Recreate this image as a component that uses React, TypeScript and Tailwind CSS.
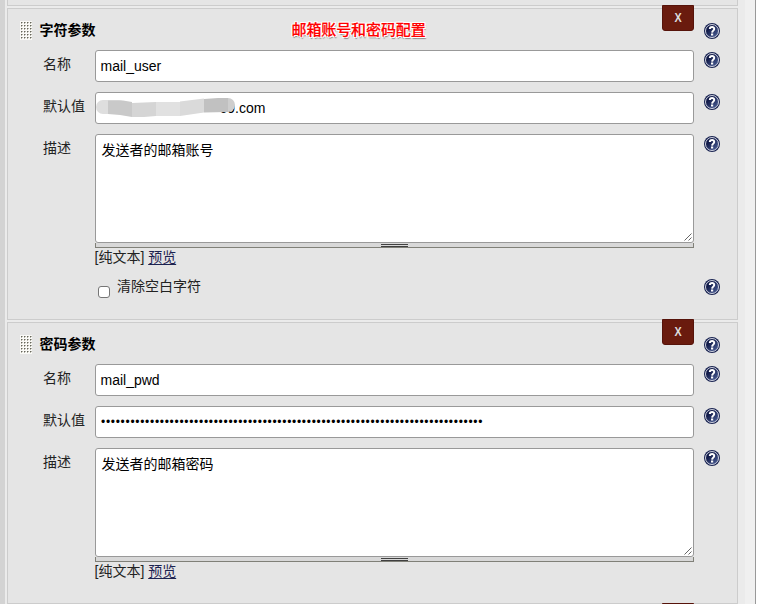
import { useId, type ReactNode } from "react";

function HelpIcon() {
  const id = useId();
  return (
    <svg width="16" height="16" viewBox="0 0 16 16" className="block">
      <defs>
        <linearGradient id={id} x1="0" y1="0" x2="1" y2="1">
          <stop offset="0.3" stopColor="#111a48" />
          <stop offset="1" stopColor="#5267a0" />
        </linearGradient>
      </defs>
      <circle cx="8" cy="8" r="8" fill="#1a2452" />
      <circle cx="8" cy="8" r="6.5" fill={`url(#${id})`} stroke="#e4e7ef" strokeWidth="0.9" />
      <path d="M5.8 6C5.9 3.3 10.4 3.3 10.2 6C10.1 7.6 8.2 7.7 8.1 9.6" fill="none" stroke="#fff" strokeWidth="2" />
      <rect x="7" y="10.5" width="2.2" height="2" fill="#fff" />
    </svg>
  );
}

function Grip() {
  const dots = [];
  for (let r = 0; r < 6; r++)
    for (let c = 0; c < 4; c++)
      dots.push(
        <g key={`${r}-${c}`}>
          <rect x={1 + c * 3} y={1 + r * 3} width="1" height="1" fill="#66665c" />
          <rect x={1 + c * 3} y={2 + r * 3} width="1" height="1" fill="#b4b3a9" />
          <rect x={c * 3 + 2} y={1 + r * 3} width="1" height="1" fill="#b4b3a9" />
        </g>
      );
  return (
    <svg width="12" height="19" className="block bg-[#fafaf7]" shapeRendering="crispEdges">
      {dots}
    </svg>
  );
}

function Row({ label, help = true, className, children }: { label?: string; help?: boolean; className: string; children: ReactNode }) {
  return (
    <div className={`flex items-start ${className}`}>
      <div className="w-[52px] shrink-0 pt-[3px] text-[14px] leading-[22px]">{label}</div>
      <div className="w-[599px] shrink-0">{children}</div>
      {help && <div className="ml-[10px] pt-[2px]"><HelpIcon /></div>}
    </div>
  );
}

const box = "relative flex h-8 items-center rounded-[3px] border border-[#999] bg-white px-[4.5px] text-[14px] text-black";

function Description({ text }: { text: string }) {
  return (
    <div>
      <div className="relative h-[109px] rounded-[3px] border border-[#999] bg-white px-[5.5px] pt-[4px] text-[14px] leading-[22px] text-black">
        {text}
        <svg width="8" height="8" className="absolute right-[1px] bottom-[1px]">
          <path d="M0.5 7.5L7.5 0.5M4.5 7.5L7.5 4.5" stroke="#555" strokeWidth="0.9" />
        </svg>
      </div>
      <div className="flex h-[5px] justify-center border-x border-b border-[#808078] bg-[#d8d8d8]">
        <div className="mt-px h-[3px] w-[27px] border-y border-[#404040]" />
      </div>
      <div className="-mt-px -ml-[0.5px] text-[14px] leading-[20px]">
        [纯文本] <a className="text-[#1c2250] underline underline-offset-2">预览</a>
      </div>
    </div>
  );
}

function DeleteButton({ children }: { children?: ReactNode }) {
  return (
    <button className="absolute -top-[4px] left-[654px] h-[26px] w-8 rounded-b-[3px] border border-[#56130a] bg-[#6a1b0e] text-[12px] leading-[24px] font-bold text-[#ddd]">
      <span className="inline-block scale-x-90 scale-y-110">{children}</span>
    </button>
  );
}

const panel = "relative w-[731px] shrink-0 border border-[#ccc] bg-[#e5e5e5]";

function Panel({ title, note, height, children }: { title: string; note?: string; height: string; children?: ReactNode }) {
  return (
    <section className={`${panel} ${height}`}>
      <DeleteButton>X</DeleteButton>
      <div className="flex h-[41px] items-start pl-[12px]">
        <div className="pt-[12px]"><Grip /></div>
        <h2 className="ml-[7.5px] w-[252px] pt-[10px] text-[14px] leading-[22px] font-bold text-black">{title}</h2>
        <div className="w-[412.5px] pt-[10px] text-[15px] leading-[22px] font-medium tracking-[-0.1px] text-[#f00] [-webkit-text-stroke:0.2px_#f00] [text-shadow:-1px_-1px_0_#fff,1px_-1px_0_#fff,-1px_1px_0_#fff,1px_1px_0_#fff,-1px_0_0_#fff,1px_0_0_#fff,1px_2px_1px_#888]">{note}</div>
        <div className="pt-[14px]"><HelpIcon /></div>
      </div>
      <div className="pl-[35px]">{children}</div>
    </section>
  );
}

function Redaction() {
  return (
    <svg width="142" height="22" className="absolute left-0 top-[4px]">
      <rect x="0" y="3" width="30" height="14" rx="7" fill="#dedede" />
      <path d="M12 3.5H27L36 5V20L24 18L12 17Z" fill="#c9c9c9" />
      <path d="M36 6L60 5V19L48 20H36Z" fill="#d5d5d5" />
      <path d="M60 5H84V19H60Z" fill="#e1e1e1" />
      <path d="M84 4.5L108 1.5V15.5L84 19Z" fill="#dadada" />
      <rect x="118" y="1" width="21" height="14" rx="7" fill="#cecece" />
      <path d="M108 2L122 1H132V15L108 15.5Z" fill="#c1c1c1" />
    </svg>
  );
}

export default function App() {
  return (
    <div className="flex h-[604px] w-[779px] overflow-hidden bg-white font-['Liberation_Sans','Noto_Sans_CJK_SC',sans-serif] text-[#222]">
      <div className="w-[5px] shrink-0 bg-[#d3d3d3]" />
      <div className="flex w-[740px] shrink-0 flex-col gap-[2px] bg-[#ebebeb] pl-[2px]">
        <div className="h-[6px] w-[731px] shrink-0 border-x border-b border-[#ccc] bg-[#e5e5e5]" />
        <Panel title="字符参数" note="邮箱账号和密码配置" height="h-[312px]">
          <Row label="名称" className="h-[42px]"><div className={box}>mail_user</div></Row>
          <Row label="默认值" className="h-[42px]">
            <div className={box}><span className="ml-[119px]">69.com</span><Redaction /></div>
          </Row>
          <Row label="描述" className="h-[143px]"><Description text="发送者的邮箱账号" /></Row>
          <Row className="h-[30px]">
            <div className="flex items-start">
              <div className="mt-[9px] ml-[3px] size-[12px] rounded-[3px] border border-[#767676] bg-white" />
              <span className="-mt-px ml-[7px] text-[14px] leading-[20px]">清除空白字符</span>
            </div>
          </Row>
        </Panel>
        <Panel title="密码参数" height="h-[282px]">
          <Row label="名称" className="h-[42px]"><div className={box}>mail_pwd</div></Row>
          <Row label="默认值" className="h-[42px]">
            <div className={box}><span className="ml-[0.5px] text-[12px] tracking-[0.698px]">{"•".repeat(78)}</span></div>
          </Row>
          <Row label="描述" className="h-[143px]"><Description text="发送者的邮箱密码" /></Row>
        </Panel>
        <section className={`${panel} h-[40px]`}><DeleteButton /></section>
      </div>
      <div className="w-[11px] shrink-0 border-r border-[#999] bg-[#f0f0f0]" />
    </div>
  );
}
